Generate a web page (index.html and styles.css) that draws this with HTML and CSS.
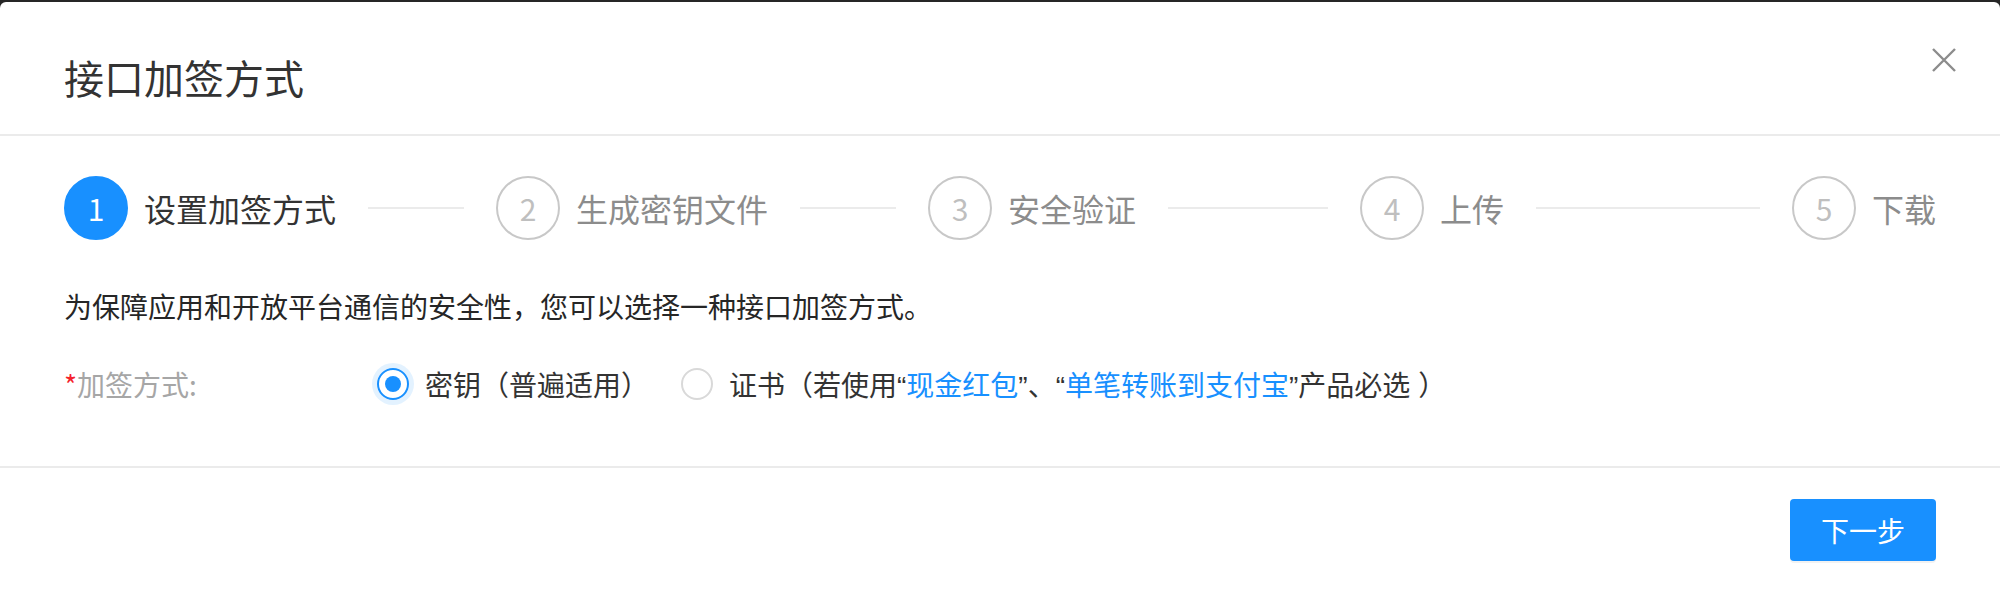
FILE: index.html
```html
<!DOCTYPE html>
<html lang="zh-CN">
<head>
    <meta charset="UTF-8">
    <meta name="viewport" content="width=device-width, initial-scale=1.0">
    <title>接口加签方式</title>
    <link rel="stylesheet" href="styles.css">
</head>
<body>

    <div class="modal">
        <div class="modalHeader">
            <div class="modalTitle">接口加签方式</div>
            <span class="closeBtn">
                <svg width="26" height="26" viewBox="0 0 26 26">
                    <path d="M2 2 L24 24 M24 2 L2 24" stroke="#8c8c8c" stroke-width="2.4" fill="none"/>
                </svg>
            </span>
        </div>

        <div class="modalBody">
            <div class="steps">
                <div class="step active">
                    <span class="stepIcon">1</span>
                    <span class="stepTitle">设置加签方式</span>
                    <span class="stepLine"></span>
                </div>
                <div class="step">
                    <span class="stepIcon">2</span>
                    <span class="stepTitle">生成密钥文件</span>
                    <span class="stepLine"></span>
                </div>
                <div class="step">
                    <span class="stepIcon">3</span>
                    <span class="stepTitle">安全验证</span>
                    <span class="stepLine"></span>
                </div>
                <div class="step">
                    <span class="stepIcon">4</span>
                    <span class="stepTitle">上传</span>
                    <span class="stepLine"></span>
                </div>
                <div class="step last">
                    <span class="stepIcon">5</span>
                    <span class="stepTitle">下载</span>
                </div>
            </div>

            <p class="desc">为保障应用和开放平台通信的安全性，您可以选择一种接口加签方式。</p>

            <div class="formRow">
                <label class="formLabel"><span class="required">*</span>加签方式:</label>
                <div class="radioGroup">
                    <label class="radio checked">
                        <span class="radioDot"></span>
                        <span class="radioText">密钥（普遍适用）</span>
                    </label>
                    <label class="radio">
                        <span class="radioDot"></span>
                        <span class="radioText">证书（若使用“<a class="link">现金红包</a>”、“<a class="link">单笔转账到支付宝</a>”产品必选 ）</span>
                    </label>
                </div>
            </div>
        </div>

        <div class="modalFooter">
            <button class="btnPrimary">下一步</button>
        </div>
    </div>

</body>
</html>
```

FILE: styles.css
```css
body {
    margin: 0;
    background: #262626;
    font-family: "Noto Sans CJK SC", "Microsoft YaHei", sans-serif;
    height: 598px;
    overflow: hidden;
}
.modal {
    margin-top: 2px;
    background: #fff;
    border-radius: 6px 6px 0 0;
    height: 596px;
}
.modalHeader {
    box-sizing: border-box;
    height: 134px;
    padding: 53px 64px 0;
    border-bottom: 2px solid #ebebeb;
    position: relative;
}
.modalTitle {
    font-size: 40px;
    line-height: 44px;
    color: #333;
}
.closeBtn {
    position: absolute;
    right: 43px;
    top: 45px;
    display: flex;
}
.modalBody {
    padding: 40px 64px 60px;
    border-bottom: 2px solid #ebebeb;
}
.steps {
    display: flex;
    align-items: center;
}
.step {
    flex: 1;
    display: flex;
    align-items: center;
    padding-left: 32px;
}
.step:first-child {
    padding-left: 0;
}
.step.last {
    flex: none;
}
.stepIcon {
    box-sizing: border-box;
    width: 64px;
    height: 64px;
    border-radius: 50%;
    border: 2px solid #c8c8c8;
    color: #bfbfbf;
    font-size: 30px;
    display: flex;
    align-items: center;
    justify-content: center;
    margin-right: 16px;
    flex: none;
}
.stepTitle {
    font-size: 32px;
    line-height: 44px;
    color: #8c8c8c;
    white-space: nowrap;
}
.stepLine {
    flex: 1;
    height: 2px;
    background: #ebebeb;
    margin-left: 32px;
}
.step.active .stepIcon {
    background: #1890ff;
    border-color: #1890ff;
    color: #fff;
}
.step.active .stepTitle {
    color: #333;
}
.desc {
    margin: 44px 0 0;
    font-size: 28px;
    line-height: 44px;
    color: #262626;
}
.formRow {
    display: flex;
    align-items: center;
    margin-top: 34px;
    height: 44px;
}
.formLabel {
    width: 313px;
    font-size: 28px;
    color: #a6a6a6;
}
.required {
    color: #f5222d;
}
.radioGroup {
    display: flex;
    align-items: center;
}
.radio {
    display: flex;
    align-items: center;
    margin-right: 32px;
    font-size: 28px;
    color: #333;
}
.radioText {
    font-family: "Liberation Sans", "Noto Sans CJK SC", sans-serif;
}
.radioDot {
    box-sizing: border-box;
    width: 32px;
    height: 32px;
    border-radius: 50%;
    border: 2px solid #d9d9d9;
    margin-right: 16px;
    position: relative;
}
.radio.checked .radioDot {
    border-color: #1890ff;
    box-shadow: 0 0 0 5px rgba(24, 144, 255, 0.12);
}
.radio.checked .radioDot::after {
    content: "";
    position: absolute;
    left: 6px;
    top: 6px;
    width: 16px;
    height: 16px;
    border-radius: 50%;
    background: #1890ff;
}
.link {
    color: #1890ff;
}
.modalFooter {
    display: flex;
    justify-content: flex-end;
    padding: 31px 64px;
}
.btnPrimary {
    width: 146px;
    height: 62px;
    border: none;
    border-radius: 4px;
    background: #1890ff;
    color: #fff;
    font-family: inherit;
    font-size: 28px;
    box-shadow: 0 2px 0 rgba(0, 0, 0, 0.05);
}
```
